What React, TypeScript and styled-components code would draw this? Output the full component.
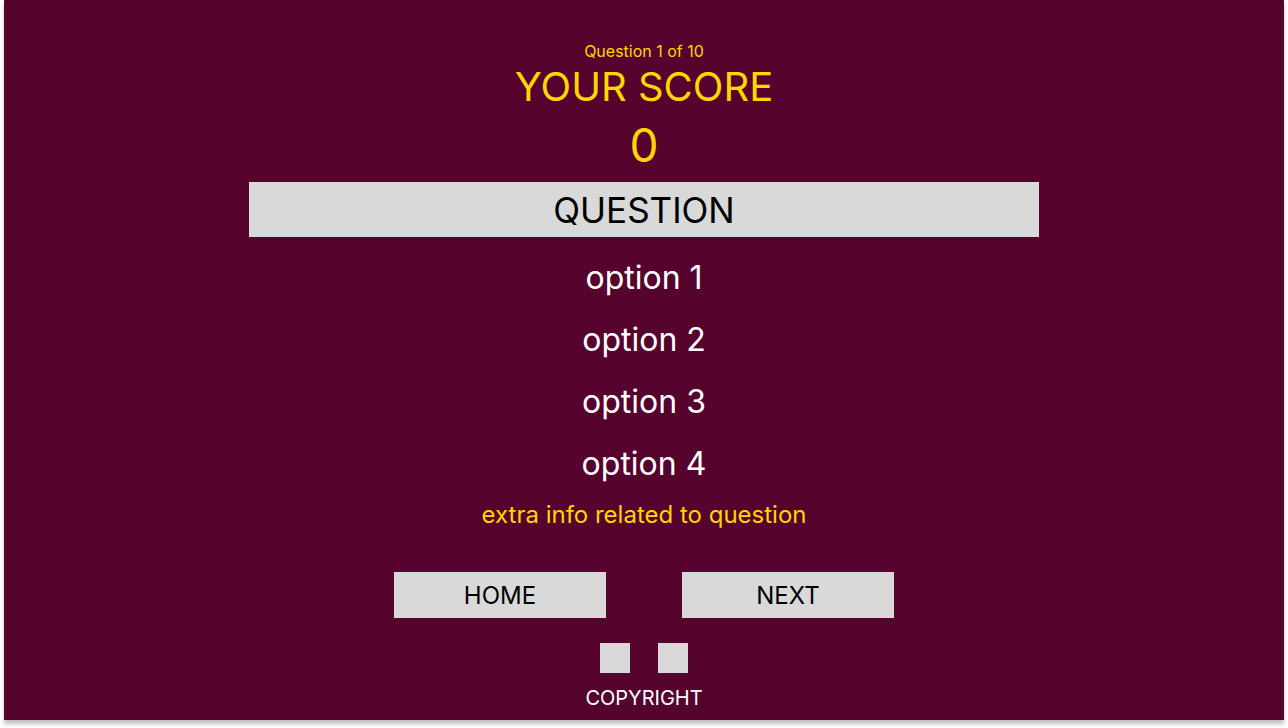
import styled, { createGlobalStyle } from "styled-components";

const GlobalStyle = createGlobalStyle`
  html, body {
    margin: 0;
    padding: 0;
    background: #ffffff;
  }
  body {
    font-family: Inter, "Noto Sans", sans-serif;
  }
`;

const options = ["option 1", "option 2", "option 3", "option 4"];

export default function App(): JSX.Element {
  return (
    <>
      <GlobalStyle />
      <Page>
        <Frame>
          <Counter>Question 1 of 10</Counter>
          <ScoreTitle>YOUR SCORE</ScoreTitle>
          <Score>0</Score>
          <QuestionBox>QUESTION</QuestionBox>
          <OptionList>
            {options.map((option) => (
              <Option key={option}>{option}</Option>
            ))}
          </OptionList>
          <ExtraInfo>extra info related to question</ExtraInfo>
          <BtnGroup>
            <NavButton>HOME</NavButton>
            <NavButton>NEXT</NavButton>
          </BtnGroup>
          <Socials>
            <SocialIcon />
            <SocialIcon />
          </Socials>
          <Copyright>COPYRIGHT</Copyright>
        </Frame>
      </Page>
    </>
  );
}

const Page = styled.div`
  width: 1288px;
  height: 728px;
  padding-left: 4px;
  box-sizing: border-box;
`;

const Frame = styled.main`
  width: 1280px;
  height: 720px;
  background-color: #56032d;
  box-shadow: 0 4px 4px rgba(0, 0, 0, 0.25);
  display: flex;
  flex-direction: column;
  align-items: center;
  padding-top: 42px;
  box-sizing: border-box;
`;

const Counter = styled.div`
  color: #ffd600;
  font-size: 16px;
  line-height: 18px;
`;

const ScoreTitle = styled.h1`
  margin: 0;
  color: #ffd600;
  font-size: 40px;
  font-weight: 400;
  line-height: 54px;
`;

const Score = styled.div`
  color: #ffd600;
  font-size: 46px;
  line-height: 62px;
`;

const QuestionBox = styled.div`
  margin-top: 6px;
  width: 790px;
  height: 55px;
  background-color: #d9d9d9;
  color: #000000;
  font-size: 35px;
  display: flex;
  align-items: center;
  justify-content: center;
`;

const OptionList = styled.div`
  margin-top: 10px;
  display: flex;
  flex-direction: column;
  align-items: center;
`;

const Option = styled.div`
  color: #ffffff;
  font-size: 32px;
  line-height: 62px;
  cursor: pointer;
`;

const ExtraInfo = styled.p`
  margin: 0;
  color: #ffd600;
  font-size: 24px;
  line-height: 40px;
`;

const BtnGroup = styled.div`
  margin-top: 37px;
  display: flex;
  gap: 76px;
`;

const NavButton = styled.button`
  width: 212px;
  height: 46px;
  border: 0;
  padding: 0;
  background-color: #d9d9d9;
  color: #000000;
  font-family: inherit;
  font-size: 24px;
  cursor: pointer;
`;

const Socials = styled.div`
  margin-top: 25px;
  display: flex;
  gap: 28px;
`;

const SocialIcon = styled.div`
  width: 30px;
  height: 30px;
  background-color: #d9d9d9;
`;

const Copyright = styled.footer`
  margin-top: 10px;
  color: #ffffff;
  font-size: 20px;
  line-height: 30px;
`;
